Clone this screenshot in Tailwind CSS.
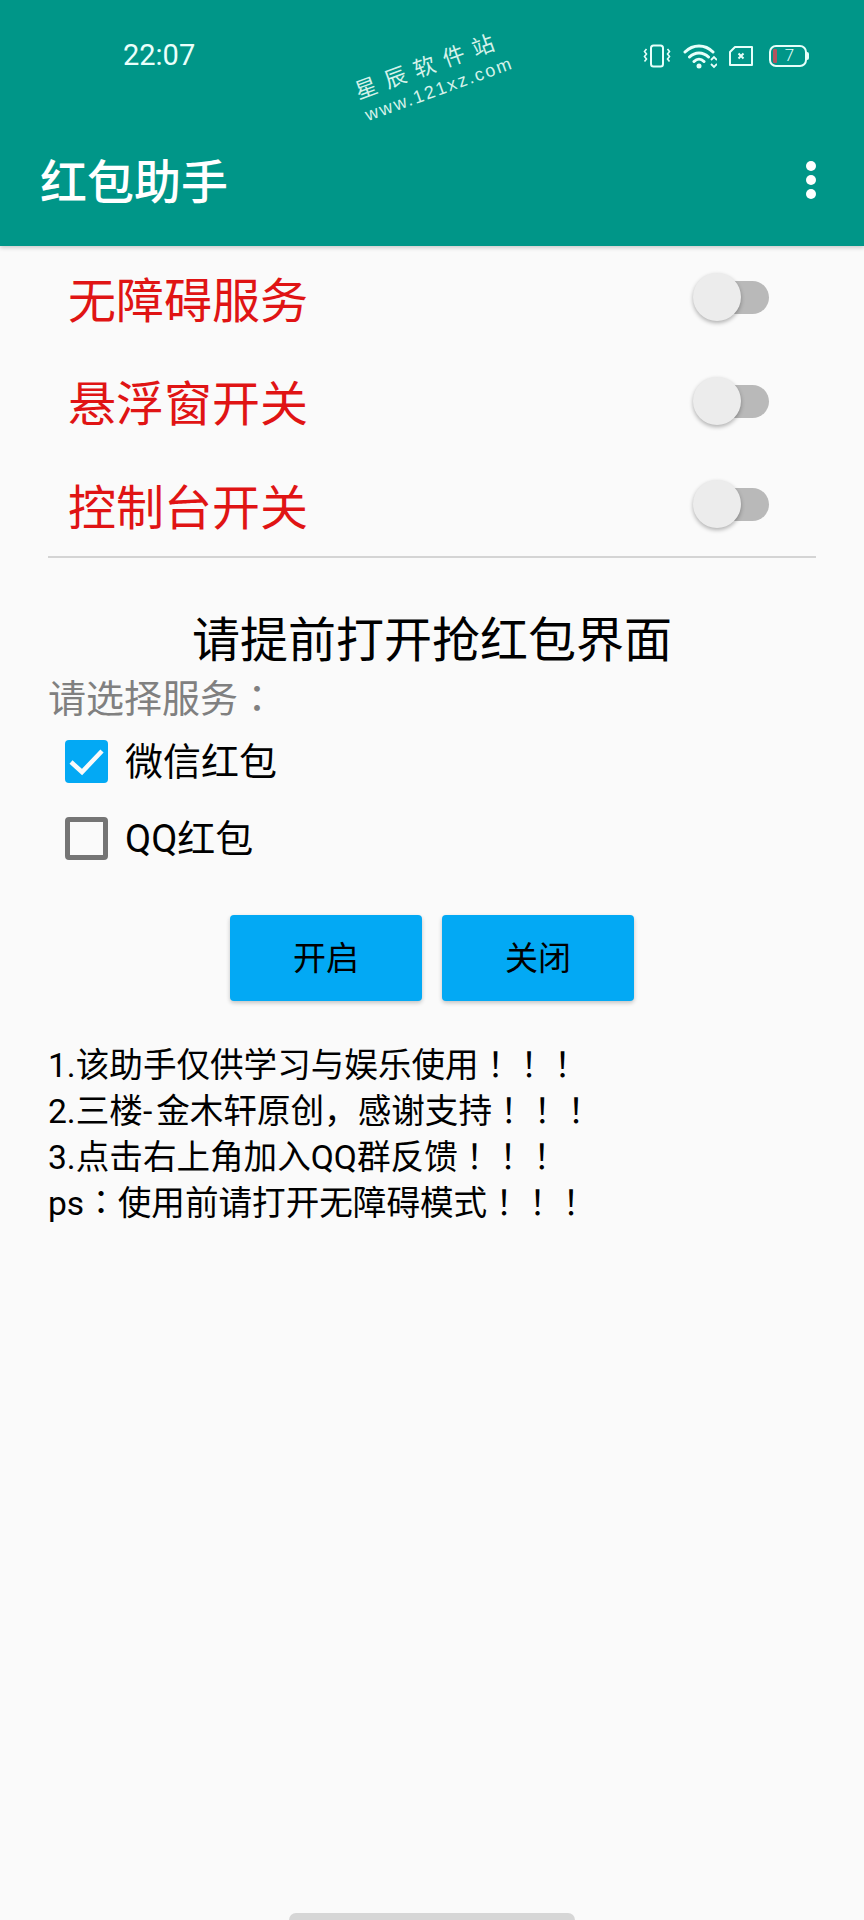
<!DOCTYPE html>
<html lang="zh">
  <head>
    <meta charset="UTF-8" />
    <meta name="viewport" content="width=device-width, initial-scale=1.0" />
    <script src="https://cdn.jsdelivr.net/npm/@tailwindcss/browser@4"></script>
    <title>红包助手</title>
  </head>
  <body class="font-['Roboto','Noto_Sans_CJK_SC',sans-serif] bg-[#fafafa]">
    <div class="relative w-[864px] h-[1920px] overflow-hidden bg-[#fafafa] text-black">
      <!-- header -->
      <header class="h-[246px] bg-[#009688] text-white shadow-[0_2px_4px_rgba(0,0,0,0.18)] relative">
        <div class="h-[110px] flex items-center pl-[123px] pr-[55px] pt-[1px]">
          <span class="text-[29px] leading-none text-[#eafffb]">22:07</span>
          <div class="ml-auto flex items-center text-[#e6fffa]">
            <svg class="w-[28px] h-[24px]" viewBox="0 0 28 24" fill="none" stroke="currentColor" stroke-width="2">
              <rect x="8" y="1.5" width="12" height="21" rx="2.5" />
              <path d="M3.5 5 l-2 2.5 l2 2.5 l-2 2.5 l2 2.5 l-2 2.5 M24.500 5 l2 2.500 l-2 2.500 l2 2.500 l-2 2.500 l2 2.500" stroke-width="1.600" />
            </svg>
            <svg class="w-[34px] h-[26px] ml-[12px]" viewBox="0 0 34 26" fill="none">
              <path d="M2 9 C10 1 22 1 30 9 M6.500 14 C12 8.500 20 8.500 25.500 14 M11 18.500 C14 15.500 18 15.500 21 18.500" stroke="currentColor" stroke-width="3" stroke-linecap="round" />
              <circle cx="16" cy="23" r="2.500" fill="currentColor" />
              <path d="M28 17 l3 -3 l3 3 M28 21 l3 3 l3 -3" stroke="currentColor" stroke-width="1.800" />
            </svg>
            <svg class="w-[26px] h-[22px] ml-[11px]" viewBox="0 0 26 22" fill="none">
              <path d="M7 2 H24 V20 H2 V7 Z" stroke="currentColor" stroke-width="2" stroke-linejoin="round" />
              <path d="M10.500 8.500 l5 5 M15.500 8.500 l-5 5" stroke="currentColor" stroke-width="2" />
            </svg>
            <div class="ml-[15px] flex items-center">
              <div class="relative w-[38px] h-[22px] rounded-[7px] border-2 border-[#e6fffa] flex items-center justify-center">
                <span class="absolute left-[2px] top-[2px] bottom-[2px] w-[4px] rounded-[1px] bg-[#b0555f]"></span>
                <span class="text-[17px] leading-none pl-[3px] font-light">7</span>
              </div>
              <span class="w-[2px] h-[8px] bg-[#e6fffa] rounded-r-sm"></span>
            </div>
          </div>
        </div>
        <div class="h-[136px] flex items-center pl-[40px] pr-[48px] pt-[4px]">
          <h1 class="text-[47px] leading-none font-medium pt-[4px]">红包助手</h1>
          <div class="ml-auto flex flex-col gap-[4px] w-[10px]">
            <span class="w-[10px] h-[10px] rounded-full bg-white"></span>
            <span class="w-[10px] h-[10px] rounded-full bg-white"></span>
            <span class="w-[10px] h-[10px] rounded-full bg-white"></span>
          </div>
        </div>
        <!-- watermark -->
        <div class="absolute left-[354px] top-[78px] -rotate-[20deg] origin-left text-[#d5f2ea]">
          <div class="text-[22px] leading-[26px] tracking-[9px] pl-[6px] font-['Noto_Sans_CJK_SC',sans-serif]">星辰软件站</div>
          <div class="mt-[4px] pl-[7px] text-[18px] leading-[22px] tracking-[2px] font-['Liberation_Sans',sans-serif]">www.121xz.com</div>
        </div>
      </header>

      <!-- switches -->
      <section class="px-[48px]">
        <div class="h-[103.5px] flex items-center pl-[20px] text-[#e01414] text-[48px] leading-none">
          <span class="pt-[8px]">无障碍服务</span>
          <div class="ml-auto mr-[47px] relative w-[72px] h-[33px] rounded-full bg-[#b9b9b9]">
            <span class="absolute left-[-4px] top-[-8px] w-[48px] h-[48px] rounded-full bg-[#ececec] shadow-[0_2px_4px_rgba(0,0,0,0.3)]"></span>
          </div>
        </div>
        <div class="h-[103.5px] flex items-center pl-[20px] text-[#e01414] text-[48px] leading-none">
          <span class="pt-[8px]">悬浮窗开关</span>
          <div class="ml-auto mr-[47px] relative w-[72px] h-[33px] rounded-full bg-[#b9b9b9]">
            <span class="absolute left-[-4px] top-[-8px] w-[48px] h-[48px] rounded-full bg-[#ececec] shadow-[0_2px_4px_rgba(0,0,0,0.3)]"></span>
          </div>
        </div>
        <div class="h-[103px] flex items-center pl-[20px] text-[#e01414] text-[48px] leading-none">
          <span class="pt-[8px]">控制台开关</span>
          <div class="ml-auto mr-[47px] relative w-[72px] h-[33px] rounded-full bg-[#b9b9b9]">
            <span class="absolute left-[-4px] top-[-8px] w-[48px] h-[48px] rounded-full bg-[#ececec] shadow-[0_2px_4px_rgba(0,0,0,0.3)]"></span>
          </div>
        </div>
        <div class="h-[2px] bg-[#d4d4d4]"></div>
      </section>

      <h2 class="mt-[53px] text-center text-[48px] leading-[60px]">请提前打开抢红包界面</h2>

      <section class="px-[48px]">
        <p class="text-[38px] leading-[50px] text-[#808080]">请选择服务<span lang="zh-TW" class="font-['Noto_Sans_CJK_TC',sans-serif]">：</span></p>
        <div class="mt-[16px] pl-[17px] flex flex-col gap-[34px]">
          <label class="h-[43px] flex items-center gap-[17px] text-[38px] leading-none">
            <span class="w-[43px] h-[43px] rounded-[4px] bg-[#03a9f4] flex items-center justify-center">
              <svg class="w-[35px] h-[35px]" viewBox="0 0 35 35" fill="none">
                <path d="M2 18 L13 28 L33 7" stroke="#fafafa" stroke-width="4.500" />
              </svg>
            </span>
            <span>微信红包</span>
          </label>
          <label class="h-[43px] flex items-center gap-[17px] text-[38px] leading-none">
            <span class="w-[43px] h-[43px] rounded-[4px] border-[5px] border-[#757575]"></span>
            <span>QQ红包</span>
          </label>
        </div>
      </section>

      <section class="mt-[55px] flex justify-center gap-[20px]">
        <button class="w-[192px] h-[86px] rounded-[4px] bg-[#03a9f4] text-[33px] leading-none shadow-[0_2px_4px_rgba(0,0,0,0.22)]">开启</button>
        <button class="w-[192px] h-[86px] rounded-[4px] bg-[#03a9f4] text-[33px] leading-none shadow-[0_2px_4px_rgba(0,0,0,0.22)]">关闭</button>
      </section>

      <section class="mt-[40px] px-[48px] text-[33.6px] leading-[44px]">
        <p class="h-[46px]">1.该助手仅供学习与娱乐使用<span lang="zh-TW" class="font-['Noto_Sans_CJK_TC',sans-serif]">！！！</span></p>
        <p class="h-[46px]">2.三楼<span class="pr-[4px]">-</span>金木轩原创，感谢支持<span lang="zh-TW" class="font-['Noto_Sans_CJK_TC',sans-serif]">！！！</span></p>
        <p class="h-[46px]">3.点击右上角加入QQ群反馈<span lang="zh-TW" class="font-['Noto_Sans_CJK_TC',sans-serif]">！！！</span></p>
        <p class="h-[46px]">ps<span lang="zh-TW" class="font-['Noto_Sans_CJK_TC',sans-serif]">：</span>使用前请打开无障碍模式<span lang="zh-TW" class="font-['Noto_Sans_CJK_TC',sans-serif]">！！！</span></p>
      </section>

      <!-- home bar -->
      <div class="absolute bottom-0 left-[289px] w-[286px] h-[7px] rounded-t-full bg-[#d6d6d6]"></div>
    </div>
  </body>
</html>
